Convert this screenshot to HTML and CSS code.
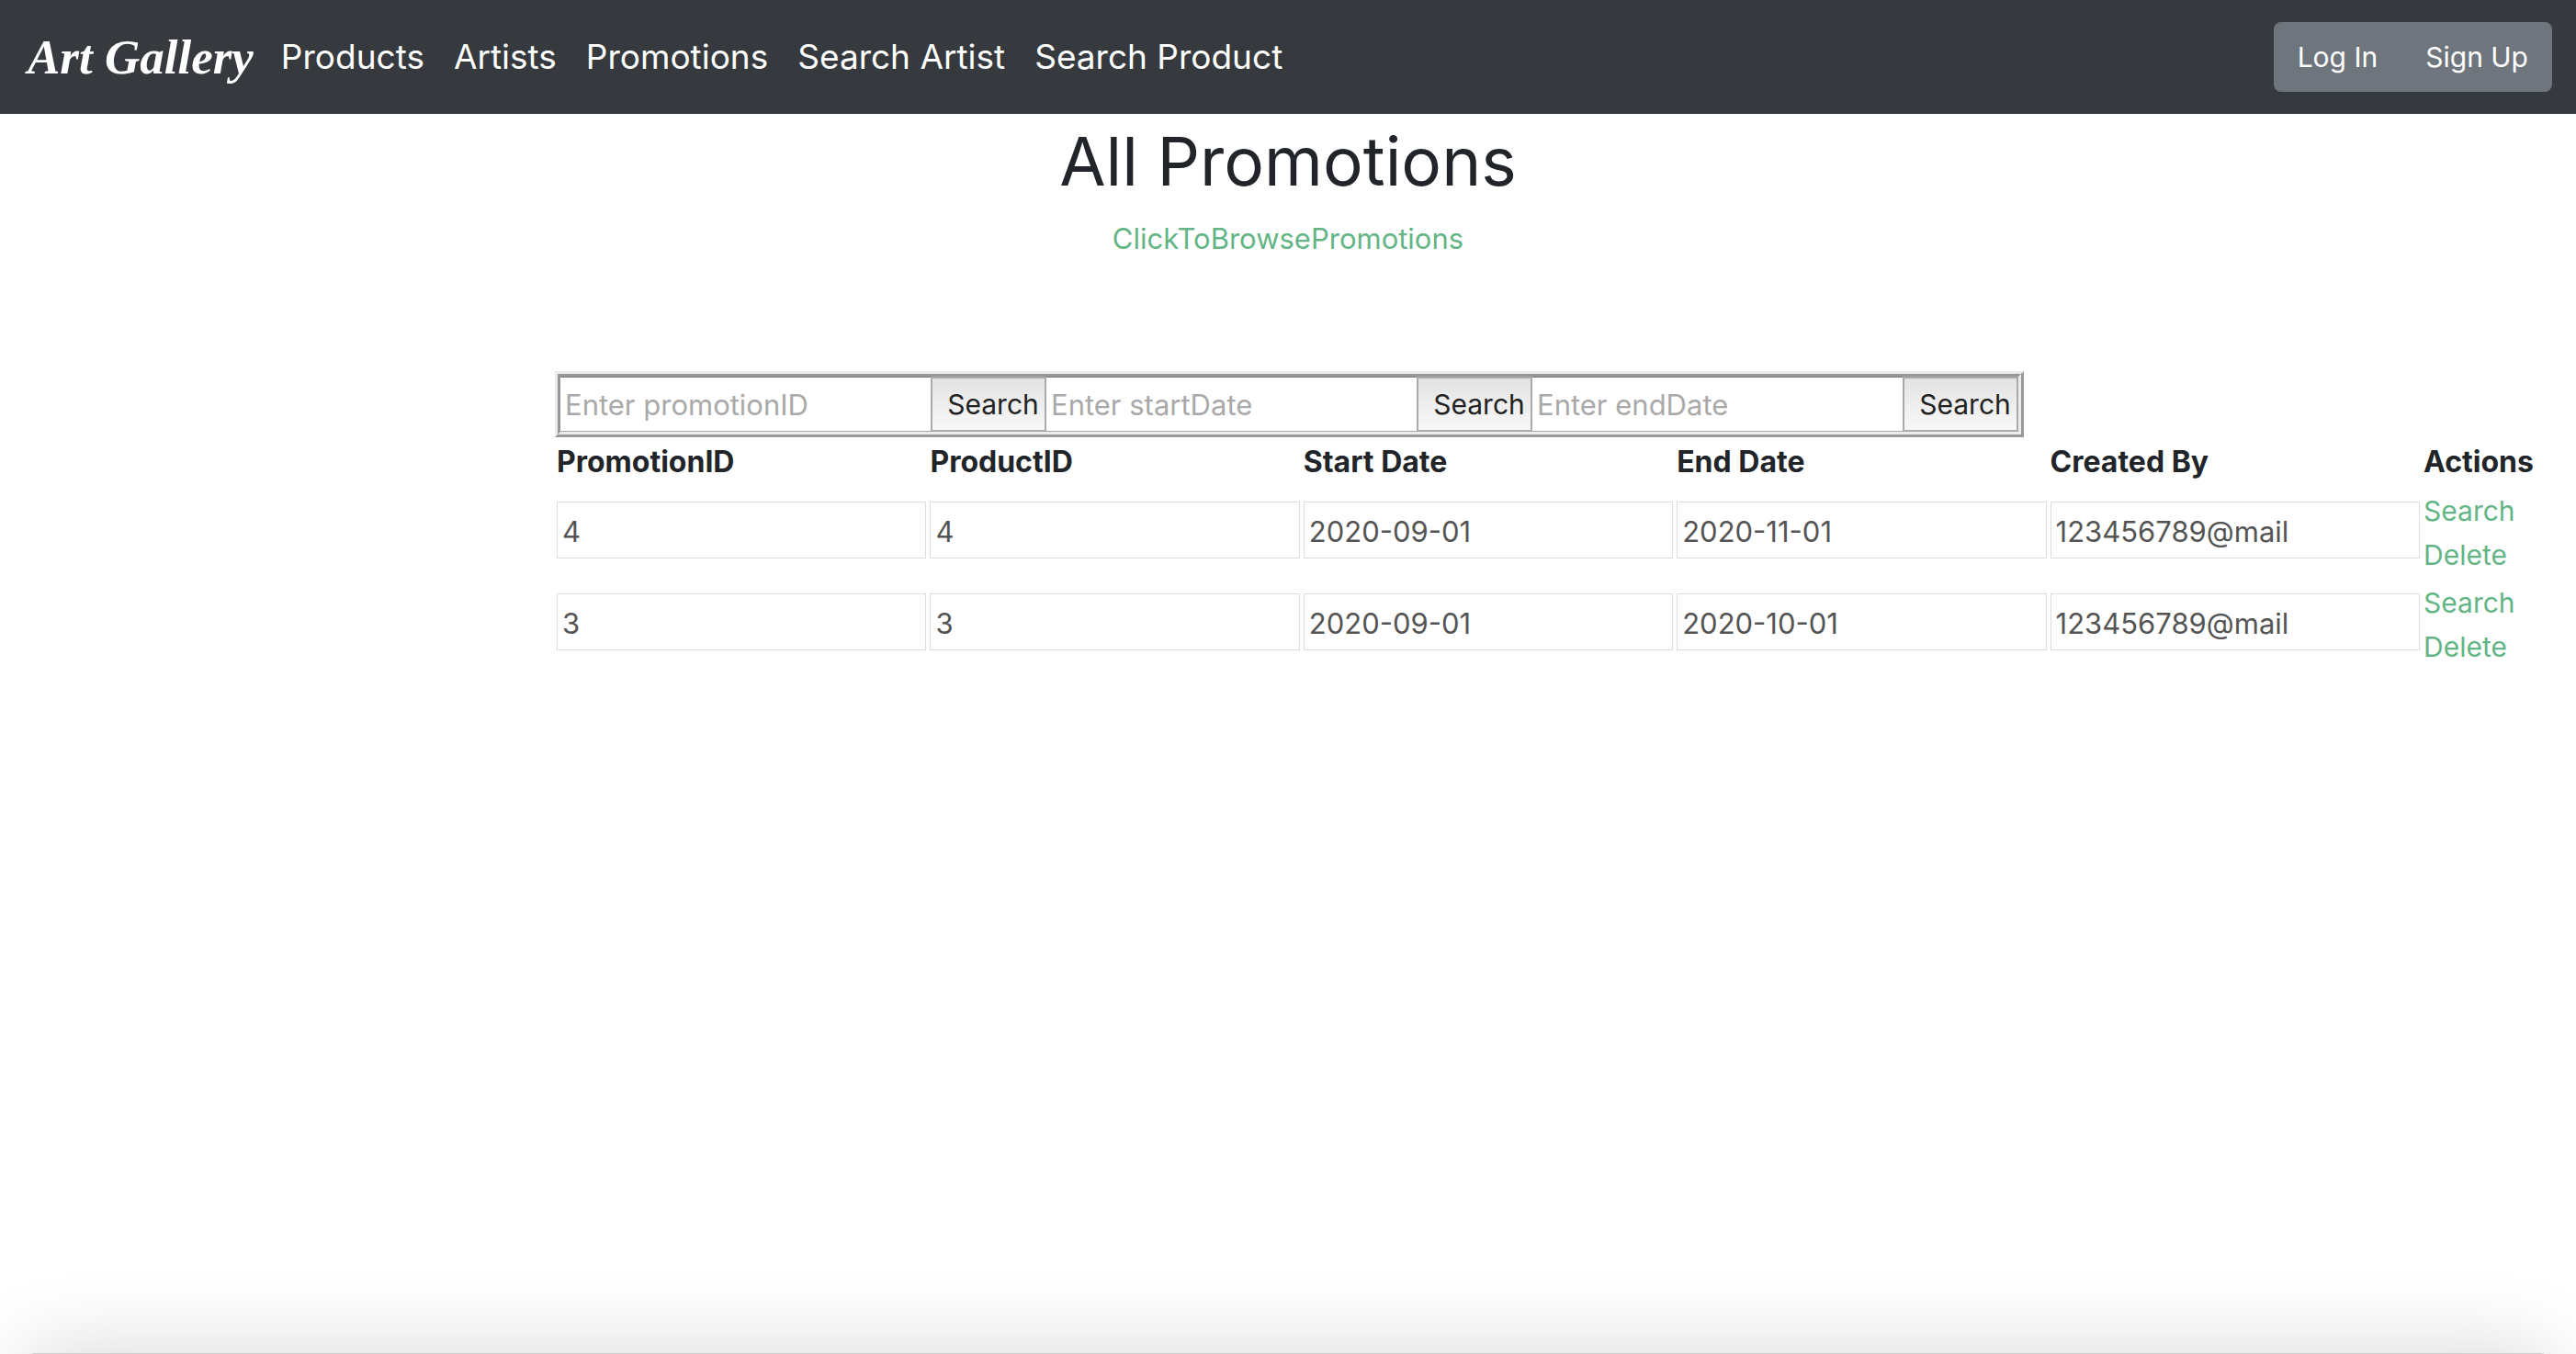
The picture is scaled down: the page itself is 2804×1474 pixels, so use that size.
FILE: index.html
```html
<!DOCTYPE html>
<html lang="en">
<head>
<meta charset="utf-8">
<title>All Promotions</title>
<link rel="stylesheet" href="styles.css">
</head>
<body>
<nav class="navbar">
  <a class="brand" href="#">Art Gallery</a>
  <div class="nav-links">
    <a href="#">Products</a>
    <a href="#">Artists</a>
    <a href="#">Promotions</a>
    <a href="#">Search Artist</a>
    <a href="#">Search Product</a>
  </div>
  <div class="btn-group">
    <button type="button">Log In</button>
    <button type="button">Sign Up</button>
  </div>
</nav>
<header class="page-head">
  <h1>All Promotions</h1>
  <a class="link" href="#">ClickToBrowsePromotions</a>
</header>
<main class="content">
  <div class="search-bar">
    <form class="search"><input type="text" aria-label="Promotion ID" placeholder="Enter promotionID"><button type="button">Search</button></form>
    <form class="search"><input type="text" aria-label="Start date" placeholder="Enter startDate"><button type="button">Search</button></form>
    <form class="search"><input type="text" aria-label="End date" placeholder="Enter endDate"><button type="button">Search</button></form>
  </div>
  <table class="promotions">
    <thead>
      <tr><th>PromotionID</th><th>ProductID</th><th>Start Date</th><th>End Date</th><th>Created By</th><th class="actions">Actions</th></tr>
    </thead>
    <tbody>
      <tr>
        <td><input aria-label="PromotionID" value="4" disabled></td>
        <td><input aria-label="ProductID" value="4" disabled></td>
        <td><input aria-label="Start Date" value="2020-09-01" disabled></td>
        <td><input aria-label="End Date" value="2020-11-01" disabled></td>
        <td><input aria-label="Created By" value="123456789@mail" disabled></td>
        <td class="actions"><a class="link" href="#">Search</a><a class="link" href="#">Delete</a></td>
      </tr>
      <tr>
        <td><input aria-label="PromotionID" value="3" disabled></td>
        <td><input aria-label="ProductID" value="3" disabled></td>
        <td><input aria-label="Start Date" value="2020-09-01" disabled></td>
        <td><input aria-label="End Date" value="2020-10-01" disabled></td>
        <td><input aria-label="Created By" value="123456789@mail" disabled></td>
        <td class="actions"><a class="link" href="#">Search</a><a class="link" href="#">Delete</a></td>
      </tr>
    </tbody>
  </table>
</main>
<div class="bottom-sheet"></div>
</body>
</html>
```
FILE: styles.css
```css
* { box-sizing: border-box; }

body {
  margin: 0;
  background: #fff;
  color: #212529;
  font: 400 31px/48px Inter, "Liberation Sans", sans-serif;
}

a { text-decoration: none; }

input, button {
  margin: 0;
  font: inherit;
}

.link { color: #63b585; }

.navbar {
  display: flex;
  align-items: center;
  min-height: 124px;
  padding: 24px 26px 24px 30px;
  background: #363a3e;
  color: #fff;
}

.navbar a { color: #fff; }

.brand {
  margin-right: 30px;
  font: italic 700 53px/64px "Liberation Serif", serif;
}

.nav-links {
  display: flex;
  gap: 32px;
  font-size: 37px;
}

.btn-group {
  display: flex;
  margin-left: auto;
  border-radius: 8px;
  background: #6e757d;
}

.btn-group button {
  padding: 14px 26px;
  border: 0;
  background: none;
  color: #fff;
  font-size: 30px;
}

.page-head { text-align: center; }

.page-head h1 {
  margin: 0;
  padding: 4px 0 12px;
  font-size: 73px;
  font-weight: 400;
  line-height: 96px;
}

.content { padding: 120px 44px 0 602px; }

.search-bar {
  display: flex;
  width: fit-content;
  margin-left: 2px;
  border: 6px ridge #ececec;
}

.search { display: flex; }

.search input {
  width: 403px;
  height: 60px;
  padding: 2px 5px;
  border: 0;
  border-top: 1px solid #777;
  border-bottom: 1px solid #aaa;
  background: #fff;
}

.search input::placeholder { color: #a9a9a9; }

.search button {
  width: 126px;
  padding: 0 6px 0 16px;
  border: 2px solid #aaa;
  background: linear-gradient(#e3e3e3, #f8f8f8);
  color: #222;
  font-size: 30px;
}

.promotions {
  width: 100%;
  table-layout: fixed;
  border-spacing: 4px;
}

.promotions th, .promotions td {
  padding: 0;
  text-align: left;
  vertical-align: top;
}

.promotions th {
  padding-bottom: 2px;
  font-size: 32px;
  line-height: 46px;
}

.promotions td { padding-top: 14px; }

.promotions .actions { width: 118px; }

.promotions td.actions {
  padding-top: 0;
  font-size: 30px;
}

.actions .link { display: block; }

.promotions input {
  display: block;
  width: 100%;
  height: 62px;
  padding: 6px 5px 4px;
  border: 1px solid #ddd;
  background: #fff;
  color: #545454;
}

/* sheet resting just under the fold; only its edge and shadow show */
.bottom-sheet {
  position: fixed;
  right: 30px;
  bottom: -199px;
  left: 30px;
  height: 200px;
  border-top: 1px solid #ccc;
  border-radius: 8px;
  box-shadow: 0 0 90px rgba(0, 0, 0, .17);
}
```
